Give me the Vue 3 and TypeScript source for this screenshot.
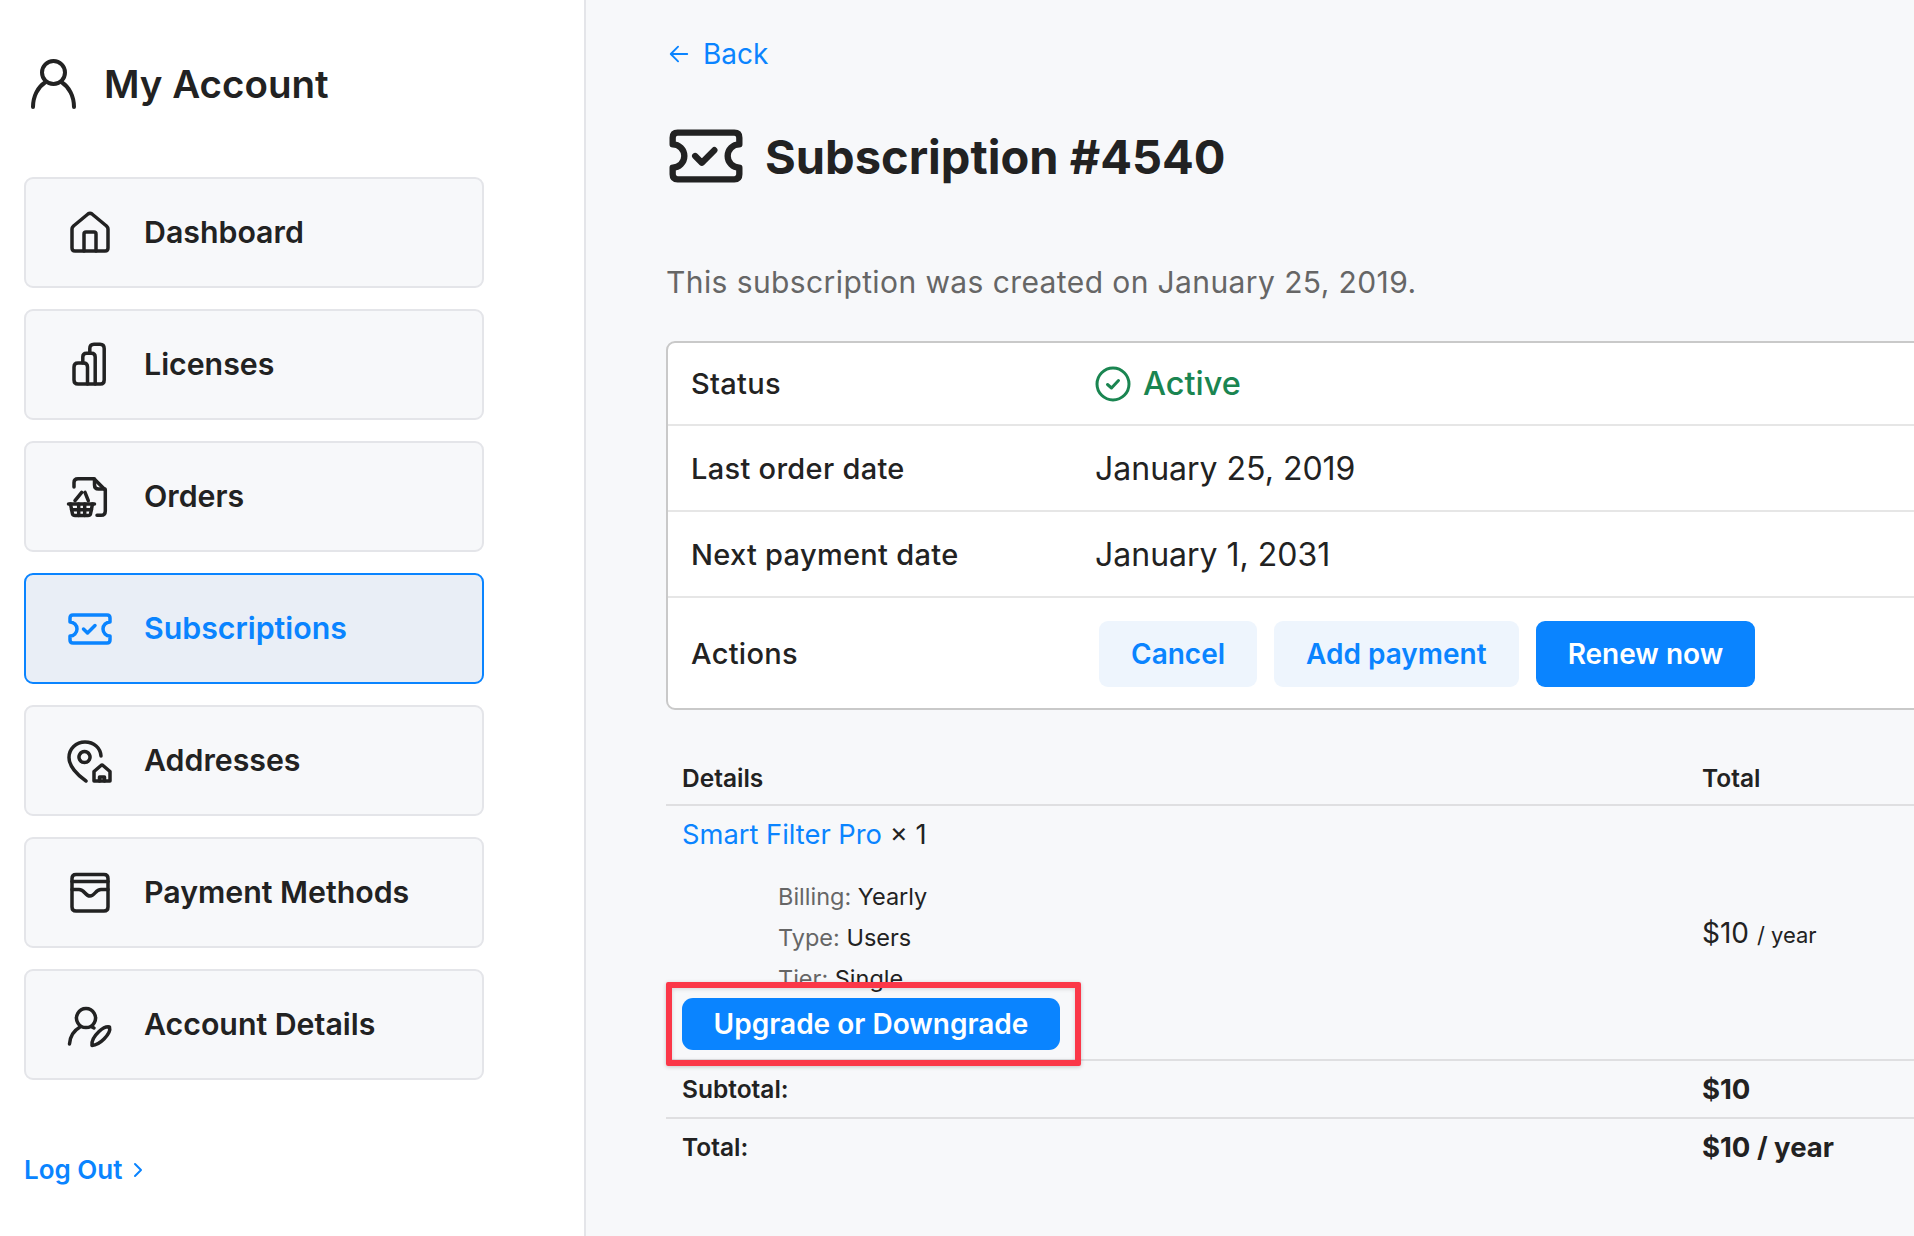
<template>
  <div class="page">
    <aside class="sidebar">
      <div class="account-head">
        <svg class="account-icon" viewBox="0 0 56 56" fill="none" stroke="currentColor" stroke-width="4" stroke-linecap="round">
          <circle cx="29.5" cy="16.5" r="11.5" />
          <path d="M9 51C9 40 14 31 21 26.5M38 26.5C45 31 50 40 50 51" />
        </svg>
        <h2>My Account</h2>
      </div>

      <nav class="nav">
        <a v-for="item in navItems" :key="item.label" class="nav-item" :class="{ active: item.active }">
          <svg class="nav-icon" viewBox="0 0 48 48" fill="none" stroke="currentColor" stroke-width="3.5" stroke-linecap="round" stroke-linejoin="round">
            <path v-for="d in item.paths" :key="d" :d="d" />
          </svg>
          <span>{{ item.label }}</span>
        </a>
      </nav>

      <a class="logout">
        Log Out
        <svg viewBox="0 0 12 20" fill="none" stroke="currentColor" stroke-width="2" stroke-linecap="round" stroke-linejoin="round">
          <path d="M3 4l6 6-6 6" />
        </svg>
      </a>
    </aside>

    <main class="main">
      <a class="back">
        <svg viewBox="0 0 24 24" fill="none" stroke="currentColor" stroke-width="2" stroke-linecap="round" stroke-linejoin="round">
          <path d="M21 12H4M11 4l-8 8 8 8" />
        </svg>
        Back
      </a>

      <div class="title-row">
        <svg class="title-icon" viewBox="0 0 48 48" fill="none" stroke="currentColor" stroke-width="3.8" stroke-linecap="round" stroke-linejoin="round">
          <path v-for="d in ticketPaths" :key="d" :d="d" />
        </svg>
        <h1>Subscription #4540</h1>
      </div>

      <p class="intro">This subscription was created on January 25, 2019.</p>

      <section class="info-box">
        <div class="info-row first">
          <span class="info-label">Status</span>
          <span class="status">
            <svg viewBox="0 0 36 36" fill="none" stroke="currentColor" stroke-linecap="round" stroke-linejoin="round">
              <circle cx="18" cy="18" r="16" stroke-width="3" />
              <path d="M12.5 18.5l4 3.5 7-7.5" stroke-width="3" />
            </svg>
            Active
          </span>
        </div>
        <div class="info-row">
          <span class="info-label">Last order date</span>
          <span class="info-value">January 25, 2019</span>
        </div>
        <div class="info-row">
          <span class="info-label">Next payment date</span>
          <span class="info-value">January 1, 2031</span>
        </div>
        <div class="info-row actions">
          <span class="info-label">Actions</span>
          <div class="btn-group">
            <button class="btn soft">Cancel</button>
            <button class="btn soft">Add payment</button>
            <button class="btn solid">Renew now</button>
          </div>
        </div>
      </section>

      <table class="details">
        <thead>
          <tr>
            <th class="details-col">Details</th>
            <th>Total</th>
          </tr>
        </thead>
        <tbody>
          <tr>
            <td class="product">
              <div class="product-name"><a>Smart Filter Pro</a> × 1</div>
              <ul class="meta">
                <li v-for="m in productMeta" :key="m.key"><span>{{ m.key }}:</span> {{ m.value }}</li>
              </ul>
              <div class="upgrade-wrap">
                <button class="upgrade">Upgrade or Downgrade</button>
                <div class="highlight"></div>
              </div>
            </td>
            <td class="price">$10 <small>/ year</small></td>
          </tr>
          <tr class="sum">
            <td>Subtotal:</td>
            <td class="sum-value">$10</td>
          </tr>
          <tr class="sum">
            <td>Total:</td>
            <td class="sum-value">$10 / year</td>
          </tr>
        </tbody>
      </table>
    </main>
  </div>
</template>

<script setup lang="ts">
const ticketPaths = [
  'M7 10H41Q44 10 44 13V17A7 7 0 0 0 44 31V35Q44 38 41 38H7Q4 38 4 35V31A7 7 0 0 0 4 17V13Q4 10 7 10Z',
  'M17.5 24L21.5 28L29 20.5',
]

const navItems = [
  {
    label: 'Dashboard',
    paths: [
      'M6 39V20Q6 18.5 7.5 17L22 5Q24 3.5 26 5L40.5 17Q42 18.5 42 20V39Q42 42 39 42H9Q6 42 6 39Z',
      'M18 42V25Q18 23 20 23H28Q30 23 30 25V42',
    ],
  },
  {
    label: 'Licenses',
    paths: [
      'M8 26Q8 22 12 22H17.5Q21.5 22 21.5 26V43H12Q8 43 8 39Z',
      'M16.8 22V16Q16.8 12.2 20.5 12.2H25.5Q29.2 12.2 29.2 16V43',
      'M23.8 12.2V7.5Q23.8 3.2 28 3.2H34Q38.2 3.2 38.2 7.5V39Q38.2 43 34.5 43H21.5',
    ],
  },
  {
    label: 'Orders',
    paths: [
      'M8 14V9.5Q8 5.7 12 5.7H28L39.3 17V38Q39.3 42.3 35 42.3H31',
      'M28.5 6V12Q28.5 16 32.5 16H39',
      'M2.5 31H28.5',
      'M4.5 31L6.5 41Q7 42.5 9 42.5H22Q24 42.5 24.5 41L26.5 31',
      'M5.5 36.8H25.5M12.7 31V42.5M18.7 31V42.5',
      'M9 27.7L15.7 19.3M22.3 27.7L19 19.3',
    ],
  },
  { label: 'Subscriptions', active: true, paths: ticketPaths },
  {
    label: 'Addresses',
    paths: [
      'M35 19C34.5 11 28 5 19 5C10 5 3 12 3 20.5C3 29 11 38 20 44',
      'M18.5 14.5a5.5 5.5 0 1 0 .01 0Z',
      'M28 44V34.5L35 28.5Q36 27.5 37 28.5L44 34.5V44Z',
      'M33.5 44V40H38.5V44',
    ],
  },
  {
    label: 'Payment Methods',
    paths: [
      'M10 5.5H38Q42 5.5 42 9.5V38Q42 42 38 42H10Q6 42 6 38V9.5Q6 5.5 10 5.5Z',
      'M6 12.5H42',
      'M6 20.5H13Q16 20.5 19 24Q24 30 29 24Q32 20.5 35 20.5H42',
    ],
  },
  {
    label: 'Account Details',
    paths: [
      'M20 7.5a9.5 9.5 0 1 0 .01 0Z',
      'M3.5 43C4 35 8 29.5 14 26M26 26L28 27',
      'M26 44.5Q25 38 33 30.5Q39 25 43.5 26Q45 31 38 38Q32 44 26 44.5Z',
    ],
  },
]

const productMeta = [
  { key: 'Billing', value: 'Yearly' },
  { key: 'Type', value: 'Users' },
  { key: 'Tier', value: 'Single' },
]
</script>

<style>
html,
body {
  margin: 0;
  background: #f7f8fa;
}
</style>

<style scoped>
.page {
  display: flex;
  height: 1236px;
  overflow: hidden;
  font-family: Inter, 'Liberation Sans', sans-serif;
  color: #222;
  background: #f7f8fa;
}
.sidebar {
  flex: 0 0 586px;
  box-sizing: border-box;
  height: 100%;
  padding: 56px 0 0 24px;
  background: #fff;
  border-right: 2px solid #e4e5e9;
}
.account-head {
  display: flex;
  align-items: center;
  gap: 24px;
  height: 56px;
  margin-bottom: 65px;
}
.account-icon {
  width: 56px;
  height: 56px;
}
.account-head h2 {
  margin: 0;
  font-size: 38.5px;
  font-weight: 600;
}
.nav {
  display: flex;
  flex-direction: column;
  gap: 21px;
  width: 460px;
}
.nav-item {
  display: flex;
  align-items: center;
  gap: 30px;
  box-sizing: border-box;
  height: 111px;
  padding-left: 40px;
  background: #f7f8fa;
  border: 2px solid #e4e5e9;
  border-radius: 9px;
  font-size: 30.3px;
  font-weight: 600;
}
.nav-item span {
  margin-top: -2px;
}
.nav-item.active {
  background: #e9eef6;
  border-color: #0a84ff;
  color: #0a84ff;
}
.nav-icon {
  flex: none;
  width: 48px;
  height: 48px;
}
.logout {
  display: flex;
  align-items: center;
  gap: 10px;
  margin-top: 74px;
  color: #0a84ff;
  font-size: 26px;
  font-weight: 600;
}
.logout svg {
  width: 12px;
  height: 20px;
}
.main {
  flex: none;
  width: 1400px;
  box-sizing: border-box;
  padding: 34px 0 0 80px;
}
.back {
  display: flex;
  align-items: center;
  gap: 13px;
  height: 40px;
  padding-left: 2px;
  color: #0a84ff;
  font-size: 28px;
}
.back svg {
  width: 22px;
  height: 22px;
}
.title-row {
  display: flex;
  align-items: center;
  gap: 19px;
  margin-top: 42px;
}
.title-icon {
  flex: none;
  width: 80px;
  height: 80px;
}
.title-row h1 {
  margin: 0;
  font-size: 47px;
  font-weight: 700;
}
.intro {
  margin: 64px 0 0;
  height: 44px;
  line-height: 44px;
  font-size: 30px;
  letter-spacing: 0.4px;
  color: #666;
}
.info-box {
  margin-top: 37px;
  background: #fff;
  border: 2px solid #c9c9c9;
  border-radius: 9px;
}
.info-row {
  display: flex;
  align-items: center;
  height: 84px;
  padding-left: 23px;
  border-top: 2px solid #e6e6e6;
}
.info-row.first {
  height: 81px;
  border-top: 0;
}
.info-row.actions {
  height: 110px;
}
.info-label {
  flex: 0 0 404px;
  font-size: 29px;
  letter-spacing: 0.3px;
  font-weight: 500;
}
.info-value {
  font-size: 32px;
}
.status {
  display: flex;
  align-items: center;
  gap: 12px;
  color: #1a8551;
  font-size: 32.5px;
  font-weight: 500;
}
.status svg {
  width: 36px;
  height: 36px;
}
.btn-group {
  display: flex;
  gap: 17px;
  margin: 1px 0 0 4px;
}
.btn {
  height: 66px;
  padding: 0 32px;
  border: 0;
  border-radius: 9px;
  font-family: inherit;
  font-size: 28px;
  font-weight: 600;
}
.btn.soft {
  background: #eef5fd;
  color: #0a84ff;
}
.btn.solid {
  background: #0a84ff;
  color: #fff;
}
.details {
  width: 100%;
  margin-top: 47px;
  border-collapse: collapse;
  table-layout: fixed;
}
.details th {
  height: 48px;
  padding: 0 16px 5px;
  box-sizing: border-box;
  text-align: left;
  font-size: 24.5px;
  font-weight: 600;
  border-bottom: 2px solid #dfdfe1;
}
.details .details-col {
  width: 1020px;
}
.details td {
  padding: 0 16px;
}
.product {
  vertical-align: top;
}
.product-name {
  margin-top: 9px;
  font-size: 27.3px;
  line-height: 40px;
}
.product-name a {
  color: #0a84ff;
}
.meta {
  list-style: none;
  height: 112px;
  margin: 21px 0 0;
  padding: 0 0 0 96px;
  font-size: 23.5px;
  line-height: 41px;
}
.meta span {
  color: #666;
}
.upgrade-wrap {
  position: relative;
  width: 378px;
  height: 52px;
  margin: 10px 0 9px;
}
.upgrade {
  display: block;
  width: 378px;
  height: 52px;
  border: 0;
  border-radius: 11px;
  background: #0a84ff;
  color: #fff;
  font-family: inherit;
  font-size: 28px;
  font-weight: 600;
}
.highlight {
  position: absolute;
  left: -16px;
  top: -16px;
  width: 415px;
  height: 84px;
  box-sizing: border-box;
  border: 6px solid #fb3748;
  border-radius: 2px;
  box-shadow: 0 1px 4px rgba(0, 0, 0, 0.2), inset 0 1px 4px rgba(0, 0, 0, 0.15);
}
.price {
  font-size: 28px;
}
.price small {
  font-size: 22px;
}
.sum td {
  height: 56px;
  font-size: 24.5px;
  font-weight: 600;
  border-top: 2px solid #dfdfe1;
}
.details .sum-value {
  font-size: 27.5px;
  font-weight: 700;
}
</style>
